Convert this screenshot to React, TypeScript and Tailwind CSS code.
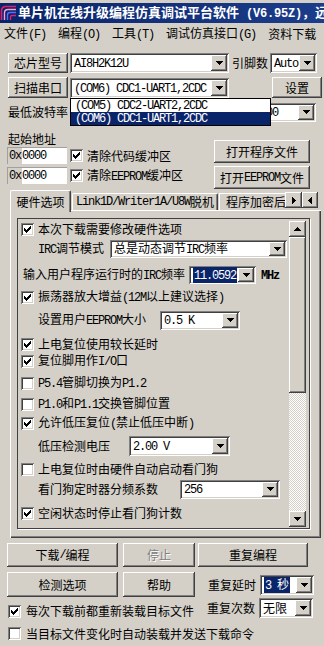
import React from "react"

const RAISED = "shadow-[inset_-1px_-1px_#404040,inset_1px_1px_#ffffff,inset_-2px_-2px_#808080]"
const SUNKEN = "shadow-[inset_1px_1px_#808080,inset_-1px_-1px_#ffffff,inset_2px_2px_#404040,inset_-2px_-2px_#d4d0c8]"
const MONO = "font-['Liberation_Mono',monospace] text-[12px] tracking-[-1.2px] whitespace-pre"

// split ascii runs out so they get the narrow half-width look of SimSun
function Txt({ s, m = MONO }: { s: string; m?: string }) {
    const parts = s.split(/([\x20-\x7e]+)/).filter(p => p !== "")
    return (
        <>
            {parts.map((p, i) =>
                /^[\x20-\x7e]+$/.test(p)
                    ? <span key={i} className={m}>{p}</span>
                    : <span key={i}>{p}</span>
            )}
        </>
    )
}

function DownArrow() {
    return (
        <svg width="7" height="4" shapeRendering="crispEdges">
            <rect x="0" y="0" width="7" height="1" />
            <rect x="1" y="1" width="5" height="1" />
            <rect x="2" y="2" width="3" height="1" />
            <rect x="3" y="3" width="1" height="1" />
        </svg>
    )
}

function UpArrow() {
    return (
        <svg width="7" height="4" shapeRendering="crispEdges">
            <rect x="3" y="0" width="1" height="1" />
            <rect x="2" y="1" width="3" height="1" />
            <rect x="1" y="2" width="5" height="1" />
            <rect x="0" y="3" width="7" height="1" />
        </svg>
    )
}

function SideArrow({ left }: { left?: boolean }) {
    const cols = left ? [3, 2, 1, 0] : [0, 1, 2, 3]
    return (
        <svg width="4" height="7" shapeRendering="crispEdges">
            {cols.map((x, i) => (
                <rect key={i} x={x} y={3 - i} width="1" height={1 + i * 2} />
            ))}
        </svg>
    )
}

function Check({ on }: { on?: boolean }) {
    return (
        <div className={`w-[13px] h-[13px] shrink-0 bg-white relative ${SUNKEN}`}>
            {on && (
                <svg width="13" height="13" className="absolute left-0 top-0" shapeRendering="crispEdges">
                    {[2, 3, 4, 3, 2, 1, 0].map((y, x) => (
                        <rect key={x} x={3 + x} y={3 + y} width="1" height="3" fill="#000" />
                    ))}
                </svg>
            )}
        </div>
    )
}

interface ComboProps {
    className: string;
    text: string;
    sel?: boolean;
    right?: boolean;
}

function Combo({ className, text, sel, right }: ComboProps) {
    return (
        <div className={`${SUNKEN} bg-white flex p-[2px] shrink-0 ${className}`}>
            <div className={`flex-1 min-w-0 flex items-center whitespace-nowrap ${right ? "justify-end pr-[20px]" : "pl-[2px]"}`}>
                <span className={sel ? "bg-[#0a246a] text-white px-[1px]" : ""}>
                    <Txt s={text} />
                </span>
            </div>
            <div className={`${RAISED} bg-[#d4d0c8] w-[16px] shrink-0 flex items-center justify-center`}>
                <DownArrow />
            </div>
        </div>
    )
}

function Btn({ className, children, disabled }: { className: string; children: React.ReactNode; disabled?: boolean }) {
    return (
        <div className={`${RAISED} bg-[#d4d0c8] flex items-center justify-center shrink-0 whitespace-nowrap ${disabled ? "text-[#808080] [text-shadow:1px_1px_#ffffff]" : ""} ${className}`}>
            {children}
        </div>
    )
}

function CheckRow({ h, on, label }: { h: string; on?: boolean; label: string }) {
    return (
        <div className={`${h} flex items-center pl-[3px] gap-[4px] whitespace-nowrap`}>
            <Check on={on} />
            <span><Txt s={label} /></span>
        </div>
    )
}

function AddrBox() {
    return (
        <div className="w-[60px] h-[17px] flex border-t border-l border-[#a0a0a0] shrink-0">
            <div className="w-[14px] bg-[#d4d0c8] flex items-center pl-[1px]"><Txt s="0x" /></div>
            <div className="flex-1 bg-white flex items-center"><Txt s="0000" /></div>
        </div>
    )
}

export default function App() {
    return (
        <div className="w-[324px] h-[646px] bg-[#d4d0c8] overflow-hidden relative flex flex-col text-[12px] leading-[14px] text-black font-['Noto_Sans_CJK_SC',sans-serif]">

            {/* title bar */}
            <div className="mt-[3px] h-[20px] shrink-0 flex items-center bg-linear-to-r from-[#0a246a] to-[#1c3d8a] whitespace-nowrap overflow-hidden">
                <svg width="16" height="16" viewBox="0 0 16 16" className="shrink-0">
                    <path d="M1.5 15 V6 Q1.5 1.5 6 1.5 H16" fill="none" stroke="#e0206a" strokeWidth="1.6" />
                    <path d="M4.5 15 V8 Q4.5 4.5 8 4.5 H16" fill="none" stroke="#ff9fd0" strokeWidth="1.4" />
                    <path d="M7.5 15 V10 Q7.5 7.5 10 7.5 H16" fill="none" stroke="#5070ff" strokeWidth="1.4" />
                    <path d="M10.5 15 V12 Q10.5 10.5 12 10.5 H16" fill="none" stroke="#e0206a" strokeWidth="1.4" />
                </svg>
                <span className="ml-[2px] text-white font-bold text-[13px]">
                    <Txt s="单片机在线升级编程仿真调试平台软件 (V6.95Z)，远" m="font-['Liberation_Mono',monospace] text-[12px] tracking-[-0.2px] whitespace-pre" />
                </span>
            </div>

            {/* menu */}
            <div className="h-[21px] shrink-0 flex items-center pl-[4px] gap-[12px] whitespace-nowrap">
                <span><Txt s="文件(F)" /></span>
                <span><Txt s="编程(O)" /></span>
                <span><Txt s="工具(T)" /></span>
                <span><Txt s="调试仿真接口(G)" /></span>
                <span>资料下载</span>
            </div>

            {/* chip row */}
            <div className="mt-[9px] h-[20px] shrink-0 flex items-center pl-[8px]">
                <Btn className="w-[60px] h-[20px]">芯片型号</Btn>
                <Combo className="ml-[2px] w-[159px] h-[20px]" text="AI8H2K12U" />
                <span className="ml-[3px] w-[36px] shrink-0">引脚数</span>
                <Combo className="ml-[2px] w-[47px] h-[20px]" text="Auto" />
            </div>

            {/* port row */}
            <div className="mt-[4px] h-[21px] shrink-0 flex items-center pl-[8px]">
                <Btn className="w-[60px] h-[21px]">扫描串口</Btn>
                <Combo className="ml-[2px] w-[159px] h-[20px]" text="(COM6) CDC1-UART1,2CDC" />
                <Btn className="ml-[43px] w-[50px] h-[21px]">设置</Btn>
            </div>

            {/* baud row */}
            <div className="mt-[4px] h-[20px] shrink-0 flex items-center pl-[8px]">
                <span className="w-[70px] shrink-0">最低波特率</span>
                <Combo className="w-[238px] h-[19px]" text="115200" right />
            </div>

            {/* open port list, drawn over the baud row */}
            <div className="absolute left-[70px] top-[98px] w-[201px] h-[28px] z-30 bg-white border border-black whitespace-nowrap">
                <div className="h-[13px] flex items-center pl-[4px]"><Txt s="(COM5) CDC2-UART2,2CDC" /></div>
                <div className="h-[13px] flex items-center pl-[4px] bg-[#0a246a] text-white"><Txt s="(COM6) CDC1-UART1,2CDC" /></div>
            </div>

            {/* address + file buttons */}
            <div className="mt-[10px] shrink-0 flex">
                <div className="w-[214px] pl-[7px] flex flex-col">
                    <div className="h-[14px] flex items-center pl-[1px]">起始地址</div>
                    <div className="mt-[1px] h-[17px] flex items-center">
                        <AddrBox />
                        <div className="ml-[3px]"><Check on /></div>
                        <span className="ml-[4px]">清除代码缓冲区</span>
                    </div>
                    <div className="mt-[3px] h-[17px] flex items-center">
                        <AddrBox />
                        <div className="ml-[3px]"><Check on /></div>
                        <span className="ml-[4px]"><Txt s="清除EEPROM缓冲区" /></span>
                    </div>
                </div>
                <div className="pt-[8px] flex flex-col gap-[3px]">
                    <Btn className="w-[96px] h-[23px]">打开程序文件</Btn>
                    <Btn className="w-[96px] h-[23px]"><Txt s="打开EEPROM文件" /></Btn>
                </div>
            </div>

            {/* tabs */}
            <div className="mt-[1px] h-[20px] shrink-0 relative flex items-end pl-[10px]">
                <div className="relative z-10 -mb-[2px] h-[22px] w-[61px] shrink-0 bg-[#d4d0c8] border-t border-l border-white border-r border-r-[#404040] rounded-t-[2px] shadow-[inset_-1px_0_#808080] flex items-center justify-center">
                    硬件选项
                </div>
                <div className="ml-[1px] h-[17px] w-[146px] shrink-0 border-t border-l border-white border-r border-r-[#404040] rounded-t-[2px] shadow-[inset_-1px_0_#808080] flex items-center justify-center whitespace-nowrap">
                    <Txt s="Link1D/Writer1A/U8W脱机" />
                </div>
                <div className="ml-[1px] h-[17px] w-[80px] shrink-0 border-t border-l border-white flex items-center pl-[6px] whitespace-nowrap">
                    程序加密后下载
                </div>
                <div className="absolute left-[285px] top-[2px] z-20 flex">
                    <div className={`${RAISED} bg-[#d4d0c8] w-[17px] h-[16px] flex items-center justify-center`}><SideArrow left /></div>
                    <div className={`${RAISED} bg-[#d4d0c8] w-[16px] h-[16px] flex items-center justify-center`}><SideArrow /></div>
                </div>
            </div>

            {/* tab panel */}
            <div className="ml-[10px] w-[311px] h-[328px] shrink-0 bg-[#d4d0c8] pt-[8px] pl-[7px] shadow-[inset_1px_1px_#ffffff,inset_-1px_-1px_#404040,inset_-2px_-2px_#808080]">
                <div className="w-[293px] h-[311px] border border-[#404040] shadow-[1px_1px_#ffffff] flex">
                    <div className="w-[271px] flex flex-col">
                        <CheckRow h="h-[20px]" on label="本次下载需要修改硬件选项" />
                        <div className="h-[20px] flex items-center pl-[20px] whitespace-nowrap">
                            <span className="shrink-0"><Txt s="IRC调节模式" /></span>
                            <Combo className="ml-[6px] w-[177px] h-[18px]" text="总是动态调节IRC频率" />
                        </div>
                        <div className="h-[31px] flex items-center pl-[5px] whitespace-nowrap">
                            <span className="shrink-0"><Txt s="输入用户程序运行时的IRC频率" /></span>
                            <Combo className="ml-[4px] w-[67px] h-[18px]" text="11.0592" sel />
                            <span className="ml-[5px] font-bold"><Txt s="MHz" /></span>
                        </div>
                        <CheckRow h="h-[14px]" on label="振荡器放大增益(12M以上建议选择)" />
                        <div className="h-[32px] flex items-center pl-[20px] whitespace-nowrap">
                            <span className="shrink-0"><Txt s="设置用户EEPROM大小" /></span>
                            <Combo className="ml-[14px] w-[80px] h-[19px]" text="0.5 K" />
                        </div>
                        <CheckRow h="h-[16px]" on label="上电复位使用较长延时" />
                        <CheckRow h="h-[18px]" on label="复位脚用作I/O口" />
                        <CheckRow h="h-[26px]" label="P5.4管脚切换为P1.2" />
                        <CheckRow h="h-[16px]" label="P1.0和P1.1交换管脚位置" />
                        <CheckRow h="h-[22px]" on label="允许低压复位(禁止低压中断)" />
                        <div className="h-[24px] flex items-center pl-[20px] whitespace-nowrap">
                            <span className="shrink-0">低压检测电压</span>
                            <Combo className="ml-[19px] w-[101px] h-[20px]" text="2.00 V" />
                        </div>
                        <CheckRow h="h-[22px]" label="上电复位时由硬件自动启动看门狗" />
                        <div className="h-[18px] flex items-center pl-[20px] whitespace-nowrap">
                            <span className="shrink-0">看门狗定时器分频系数</span>
                            <Combo className="ml-[22px] w-[100px] h-[19px]" text="256" />
                        </div>
                        <CheckRow h="h-[30px]" on label="空闲状态时停止看门狗计数" />
                    </div>

                    {/* scrollbar */}
                    <div className="w-[17px] mt-[2px] mb-[1px] mr-[3px] flex flex-col">
                        <div className={`${RAISED} bg-[#d4d0c8] h-[16px] flex items-center justify-center`}><UpArrow /></div>
                        <div className={`${RAISED} bg-[#d4d0c8] h-[156px]`}></div>
                        <div className="flex-1 bg-[image:repeating-conic-gradient(#ffffff_0_25%,#d4d0c8_0_50%)] bg-[length:2px_2px]"></div>
                        <div className={`${RAISED} bg-[#d4d0c8] h-[16px] flex items-center justify-center`}><DownArrow /></div>
                    </div>
                </div>
            </div>

            {/* bottom buttons */}
            <div className="mt-[5px] h-[24px] shrink-0 flex pl-[7px]">
                <Btn className="w-[111px] h-[24px]"><Txt s="下载/编程" /></Btn>
                <Btn className="ml-[5px] w-[72px] h-[24px]" disabled>停止</Btn>
                <Btn className="ml-[3px] w-[110px] h-[24px]">重复编程</Btn>
            </div>
            <div className="mt-[5px] h-[25px] shrink-0 flex items-center pl-[7px]">
                <Btn className="w-[111px] h-[25px]">检测选项</Btn>
                <Btn className="ml-[5px] w-[72px] h-[25px]">帮助</Btn>
                <span className="ml-[13px] shrink-0">重复延时</span>
                <Combo className="ml-[4px] w-[54px] h-[20px]" text="3 秒" sel />
            </div>
            <div className="mt-[1px] h-[20px] shrink-0 flex pl-[8px]">
                <div className="w-[199px] shrink-0 flex items-end">
                    <div className="flex items-center gap-[5px] whitespace-nowrap">
                        <Check on />
                        <span>每次下载前都重新装载目标文件</span>
                    </div>
                </div>
                <div className="flex items-center">
                    <span className="shrink-0">重复次数</span>
                    <Combo className="ml-[4px] w-[54px] h-[20px]" text="无限" />
                </div>
            </div>
            <div className="mt-[9px] h-[13px] shrink-0 flex items-center gap-[5px] pl-[8px] whitespace-nowrap">
                <Check />
                <span>当目标文件变化时自动装载并发送下载命令</span>
            </div>
        </div>
    )
}
